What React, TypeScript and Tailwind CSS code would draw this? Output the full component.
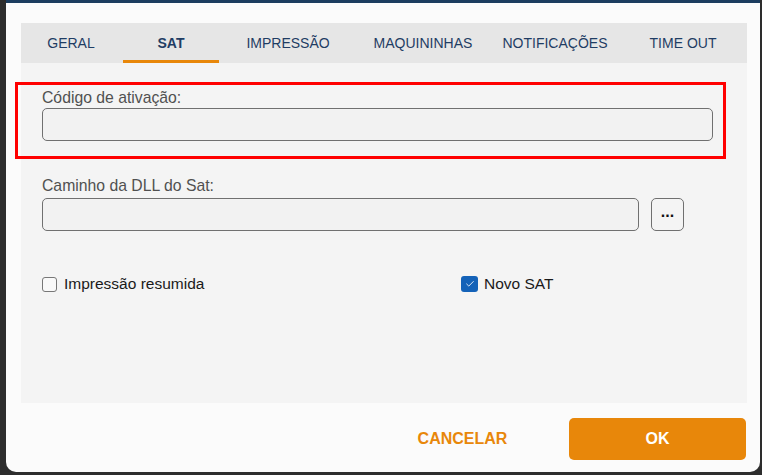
import { Check } from 'lucide-react'

const tabs = [
  { label: 'GERAL', w: 'w-[100px]' },
  { label: 'SAT', w: 'w-[100px]', active: true },
  { label: 'IMPRESSÃO', w: 'w-[134px]' },
  { label: 'MAQUININHAS', w: 'w-[136px]' },
  { label: 'NOTIFICAÇÕES', w: 'w-[128px]' },
  { label: 'TIME OUT', w: 'w-[128px]' },
]

const App = () => {
  return (
    <div className="relative w-[762px] h-[475px] bg-[#2d2d2d] pl-[6px] pr-[2px] pb-[3px] font-[family-name:Liberation_Sans,Arial,sans-serif]">
      <div className="h-full flex flex-col bg-[#fbfbfb] border-t-[3px] border-[#1c3d5f] rounded-b-[10px]">
        <div className="pt-[20px] pl-[15px] pr-[13px]">
          <div className="w-[726px] h-[380px] flex flex-col">
            <div className="flex h-[40px] bg-[#e6e6e6]">
              {tabs.map((t) => (
                <div key={t.label} className={`${t.w} relative flex items-center justify-center text-[14px] text-[#1f3d64] ${t.active ? 'font-bold' : ''}`}>
                  {t.label}
                  {t.active && <span className="absolute bottom-0 left-[2px] right-[2px] h-[3px] bg-[#e8870a]" />}
                </div>
              ))}
            </div>
            <div className="flex-1 bg-[#f4f4f4] pt-[26px] pl-[21px] pr-[34px]">
              <div className="text-[15.75px] leading-[18px] text-[#505050]">Código de ativação:</div>
              <div className="mt-[1px] h-[33px] border border-[#707070] rounded-[5px] bg-[#f2f2f2]" />

              <div className="mt-[36px] text-[15.75px] leading-[18px] text-[#505050]">Caminho da DLL do Sat:</div>
              <div className="mt-[3px] flex gap-[12px]">
                <div className="w-[597px] h-[33px] border border-[#707070] rounded-[5px] bg-[#f2f2f2]" />
                <button className="w-[33px] h-[33px] border border-[#707070] rounded-[5px] bg-[#f4f4f4] text-[16px] font-bold leading-none text-[#111] pb-[6px]">
                  ...
                </button>
              </div>

              <div className="mt-[44px] flex items-center h-[18px]">
                <div className="w-[419px] flex items-center gap-[7px]">
                  <span className="w-[15px] h-[15px] border border-[#777] rounded-[3px] bg-[#f9f9f9]" />
                  <span className="text-[15.5px] text-[#1a1a1a]">Impressão resumida</span>
                </div>
                <div className="flex items-center gap-[6px]">
                  <span className="w-[17px] h-[16px] rounded-[3px] bg-[#1462b8] flex items-center justify-center">
                    <Check size={10} strokeWidth={2} color="#ffffff" />
                  </span>
                  <span className="text-[15.5px] text-[#1a1a1a]">Novo SAT</span>
                </div>
              </div>
            </div>
          </div>
        </div>
        <div className="flex justify-end gap-[18px] pt-[15px] pr-[14px]">
          <button className="w-[177px] h-[42px] text-[16px] font-bold text-[#e8870a]">CANCELAR</button>
          <button className="w-[177px] h-[42px] rounded-[5px] bg-[#e8870a] text-[16px] font-bold text-white">OK</button>
        </div>
      </div>
      <div className="absolute left-[15px] top-[82px] w-[711px] h-[77px] border-[3px] border-[#ff0000]" />
    </div>
  )
}
export default App
